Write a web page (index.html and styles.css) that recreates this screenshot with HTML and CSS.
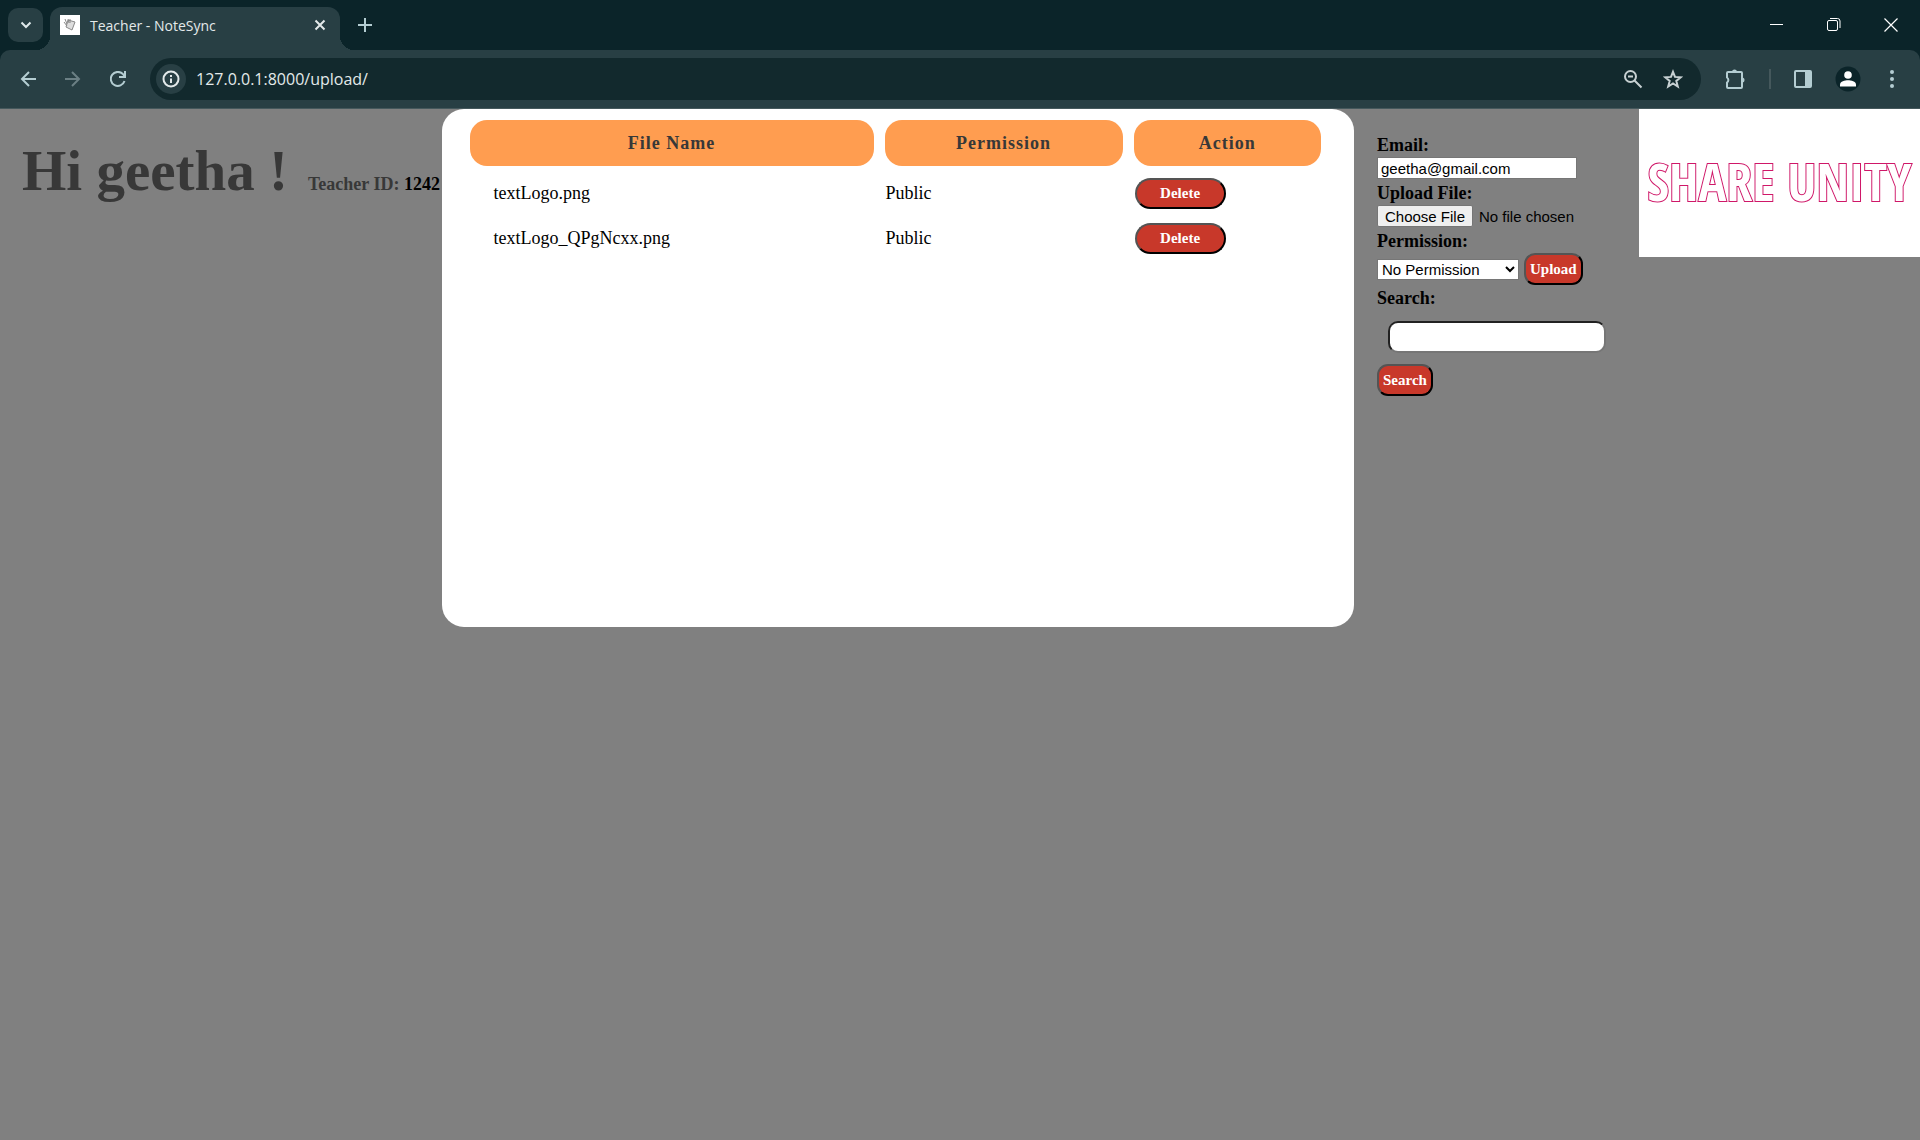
FILE: index.html
```html
<!DOCTYPE html>
<html lang="en">
<head>
<meta charset="utf-8">
<title>Teacher - NoteSync</title>
<link rel="stylesheet" href="styles.css">
</head>
<body>
<header class="browser">
  <div class="tabstrip">
    <button class="tab-search" aria-label="Search tabs"><svg width="12" height="8" viewBox="0 0 12 8"><path d="M1.500 1.500 6 6l4.500-4.500" fill="none" stroke="currentColor" stroke-width="2"/></svg></button>
    <div class="tab">
      <svg class="favicon" width="20" height="20" viewBox="0 0 20 20"><path fill="#fff" d="M0 0h20v20H0z"/><g fill="#ddd" stroke="#888"><path d="m8 5 7 2-3 8-6-3z"/><path d="m5 4 2 5M4 7l3 4M8 4l1 4M10 4l0 4"/></g></svg>
      <span class="tab-title">Teacher - NoteSync</span>
      <button class="icon-btn" aria-label="Close tab"><svg width="12" height="12" viewBox="0 0 12 12"><path d="m1.500 1.500 9 9m0-9-9 9" stroke="currentColor" stroke-width="2"/></svg></button>
    </div>
    <button class="icon-btn new-tab" aria-label="New tab"><svg width="14" height="14" viewBox="0 0 14 14"><path d="M7 0v14M0 7h14" stroke="currentColor" stroke-width="2"/></svg></button>
    <div class="window-controls">
      <button class="icon-btn" aria-label="Minimize"><svg width="14" height="14" viewBox="0 0 14 14"><path d="M0 6.500h13" stroke="#fff"/></svg></button>
      <button class="icon-btn" aria-label="Restore"><svg width="14" height="14" viewBox="0 0 14 14" fill="none" stroke="#fff"><rect x=".5" y="2.500" width="10" height="10" rx="1.500"/><path d="M3 .5h7.500a2.500 2.500 0 0 1 2.500 2.500v7"/></svg></button>
      <button class="icon-btn" aria-label="Close"><svg width="14" height="14" viewBox="0 0 14 14"><path d="m.5.5 13 13m0-13-13 13" stroke="#fff" stroke-width="1.200"/></svg></button>
    </div>
  </div>
  <div class="toolbar">
    <nav class="nav-buttons">
      <button class="icon-btn" aria-label="Back"><svg width="16" height="16" viewBox="0 0 16 16"><path d="M16 8H2m7-7L2 8l7 7" fill="none" stroke="currentColor" stroke-width="2"/></svg></button>
      <button class="icon-btn dim" aria-label="Forward"><svg width="16" height="16" viewBox="0 0 16 16"><path d="M0 8h14M7 1l7 7-7 7" fill="none" stroke="currentColor" stroke-width="2"/></svg></button>
      <button class="icon-btn" aria-label="Reload"><svg width="16" height="16" viewBox="0 0 16 16"><path d="M14.500 10A7 7 0 1 1 13 3.200L14.500 5" fill="none" stroke="currentColor" stroke-width="2"/><path d="M16 0v7H9V5h5V0z" fill="currentColor"/></svg></button>
    </nav>
    <div class="omnibox">
      <button class="site-info" aria-label="Site information"><svg width="18" height="18" viewBox="0 0 18 18"><circle cx="9" cy="9" r="7.500" fill="none" stroke="currentColor" stroke-width="2"/><path d="M9 5v2m0 1.500V13" stroke="currentColor" stroke-width="2"/></svg></button>
      <input class="url" type="text" aria-label="Address" value="127.0.0.1:8000/upload/">
      <button class="icon-btn" aria-label="Zoom"><svg width="20" height="20" viewBox="0 0 20 20"><g fill="none" stroke="currentColor" stroke-width="2"><circle cx="7.500" cy="7.500" r="5.500"/><path d="m11.500 11.500 7 7M5 7.500h5"/></g></svg></button>
      <button class="icon-btn" aria-label="Bookmark"><svg width="20" height="20" viewBox="0 0 20 20"><path d="m10 2.800 2 5.100 5.800.4-4.500 3.600 1.500 5.600-4.800-3.100-4.800 3.100 1.500-5.600-4.500-3.600 5.800-.4z" fill="none" stroke="currentColor" stroke-width="2"/></svg></button>
    </div>
    <div class="actions">
      <button class="icon-btn" aria-label="Extensions"><svg width="22" height="22" viewBox="0 0 22 22"><path d="M4 4h13a1 1 0 0 1 1 1v14a1 1 0 0 1-1 1H4a1 1 0 0 1-1-1v-4.500a3 3 0 0 0 0-5V5a1 1 0 0 1 1-1z" fill="none" stroke="currentColor" stroke-width="2"/><path d="M8 4a2.500 2.500 0 0 1 5 0zM18 9.500a2.500 2.500 0 0 1 0 5z" fill="currentColor"/></svg></button>
      <span class="divider"></span>
      <button class="icon-btn" aria-label="Side panel"><svg width="18" height="18" viewBox="0 0 18 18"><rect x="1" y="1" width="16" height="16" rx="1" fill="none" stroke="currentColor" stroke-width="2"/><path d="M11 1h6v16h-6z" fill="currentColor"/></svg></button>
      <button class="icon-btn" aria-label="Profile"><svg width="26" height="26" viewBox="0 0 26 26"><circle cx="13" cy="13" r="12.500" fill="#0b2429"/><circle cx="13" cy="9" r="3.800" fill="#fff"/><path d="M5 20.500v-2c0-3 5-4.300 8-4.300s8 1.300 8 4.300v2z" fill="#fff"/></svg></button>
      <button class="icon-btn" aria-label="Menu"><svg width="16" height="20" viewBox="0 0 16 20" fill="currentColor"><circle cx="8" cy="3" r="2"/><circle cx="8" cy="10" r="2"/><circle cx="8" cy="17" r="2"/></svg></button>
    </div>
  </div>
</header>
<main class="page">
  <section class="greeting">
    <h1>Hi geetha !</h1>
    <p class="teacher">Teacher ID: <span class="teacher-id">1242</span></p>
  </section>
  <section class="files">
    <table>
      <colgroup><col class="col-name"><col class="col-permission"><col class="col-action"></colgroup>
      <thead><tr><th>File Name</th><th>Permission</th><th>Action</th></tr></thead>
      <tbody>
        <tr><td>textLogo.png</td><td>Public</td><td><button class="btn btn-delete">Delete</button></td></tr>
        <tr><td>textLogo_QPgNcxx.png</td><td>Public</td><td><button class="btn btn-delete">Delete</button></td></tr>
      </tbody>
    </table>
  </section>
  <form class="upload">
    <label for="email">Email:</label>
    <input class="email" id="email" type="text" value="geetha@gmail.com">
    <label for="file">Upload File:</label>
    <input class="file" id="file" type="file">
    <label for="permission">Permission:</label>
    <div class="permission-row">
      <select id="permission"><option>No Permission</option><option>Public</option></select>
      <button class="btn" type="button">Upload</button>
    </div>
    <label for="search">Search:</label>
    <input class="search" id="search" type="text">
    <button class="btn" type="button">Search</button>
  </form>
  <aside class="logo">SHARE UNITY</aside>
</main>
</body>
</html>
```
FILE: styles.css
```css
* { box-sizing: border-box; }

body {
  display: flex;
  flex-direction: column;
  min-height: 100vh;
  margin: 0;
  background: #808080;
  font-family: "Liberation Serif", serif;
  font-size: 18px;
  color: #000;
}

/* Browser window */
.browser {
  background: #0b2429;
  color: #b4cdd2;
  font-family: "Open Sans", sans-serif;
}

.tabstrip {
  display: flex;
  align-items: center;
  height: 50px;
  padding-left: 8px;
}

.icon-btn,
.tab-search,
.site-info {
  display: flex;
  align-items: center;
  justify-content: center;
  padding: 0;
  border: 0;
  background: none;
  color: inherit;
}

.tab-search {
  width: 35px;
  height: 34px;
  border-radius: 10px;
  background: #283f44;
  color: #dfe9eb;
}

.tab {
  position: relative;
  display: flex;
  align-items: center;
  align-self: flex-end;
  gap: 10px;
  width: 290px;
  height: 43px;
  margin-left: 7px;
  padding: 0 14px 7px 10px;
  border-radius: 12px 12px 0 0;
  background: #283f44;
  color: #e3e9ea;
}

.tab::before,
.tab::after {
  content: "";
  position: absolute;
  bottom: 0;
  width: 14px;
  height: 14px;
}

.tab::before {
  right: 100%;
  background: radial-gradient(circle at 0 0, transparent 14px, #283f44 14px);
}

.tab::after {
  left: 100%;
  background: radial-gradient(circle at 100% 0, transparent 14px, #283f44 14px);
}

.tab-title {
  flex: 1;
  font-size: 14px;
}

.new-tab { margin-left: 18px; }

.window-controls {
  display: flex;
  gap: 43px;
  margin-left: auto;
  padding-right: 22px;
}

.toolbar {
  display: flex;
  align-items: center;
  height: 59px;
  padding: 0 20px;
  border-bottom: 1px solid #45585c;
  border-radius: 10px 10px 0 0;
  background: #283f44;
}

.nav-buttons {
  display: flex;
  gap: 29px;
}

.dim { color: #6b7f84; }

.omnibox {
  display: flex;
  flex: 1;
  align-items: center;
  gap: 20px;
  height: 42px;
  margin-left: 24px;
  padding: 0 18px 0 6px;
  border-radius: 21px;
  background: #12292d;
  color: #c7d0d2;
}

.site-info {
  width: 30px;
  height: 30px;
  border-radius: 50%;
  background: #283f44;
  color: #e3e9ea;
}

.url {
  flex: 1;
  min-width: 0;
  margin-left: -10px;
  padding: 0;
  border: 0;
  background: none;
  color: #e3e9ea;
  font: 16px "Open Sans", sans-serif;
}

.actions {
  display: flex;
  align-items: center;
  gap: 23px;
  margin-left: 23px;
}

.divider {
  width: 2px;
  height: 20px;
  background: #45585c;
}

/* Page */
.page {
  display: grid;
  grid-template-columns: 23% 475fr 285px 281px;
  align-items: start;
}

.greeting {
  display: flex;
  align-items: baseline;
  gap: 20px;
  padding: 29px 0 0 22px;
  color: #383838;
  white-space: nowrap;
}

h1 {
  margin: 0;
  font-size: 57px;
}

.teacher {
  margin: 0;
  font-weight: bold;
}

.teacher-id { color: #000; }

.files {
  min-height: 518px;
  padding: 0 22px 0 17px;
  border-radius: 22px;
  background: #fff;
}

table {
  width: 100%;
  border-spacing: 11px;
  table-layout: fixed;
}

.col-name { width: 404px; }
.col-permission { width: 238px; }

th {
  height: 46px;
  border-radius: 17px;
  background: #ff9d50;
  color: #383838;
  letter-spacing: 1px;
}

td {
  height: 34px;
  padding: 0 1px 2px;
}

td:first-child { padding-left: 24px; }

.btn {
  height: 32px;
  padding: 0 4px;
  border: 2px outset #000;
  border-radius: 11px;
  background: #c8382a;
  color: #fff;
  font: bold 15px "Liberation Serif", serif;
}

.btn-delete {
  display: block;
  width: 91px;
  height: 31px;
  border-radius: 16px;
}

.upload {
  display: flex;
  flex-direction: column;
  align-items: flex-start;
  padding: 24px 0 0 23px;
}

.upload label {
  font-weight: bold;
  line-height: 24px;
}

.upload input,
.upload select {
  font: 15px "Liberation Sans", sans-serif;
}

.upload .email {
  width: 200px;
  height: 22px;
  margin: 0 0 2px;
  padding: 0 3px;
  border: 1px solid #767676;
  background: #fff;
}

.upload .file {
  width: 240px;
  height: 24px;
}

.file::file-selector-button {
  width: 96px;
  height: 22px;
  margin-right: 6px;
  padding: 0;
  border: 1px solid #767676;
  border-radius: 2px;
  background: #efefef;
  font: 15px "Liberation Sans", sans-serif;
}

.permission-row {
  display: flex;
  align-items: center;
  gap: 5px;
  margin-bottom: 1px;
}

select {
  width: 142px;
  height: 21px;
  border: 1px solid #767676;
  background: #fff;
}

.search {
  width: 218px;
  height: 32px;
  margin: 11px;
  border: 2px inset #767676;
  border-radius: 10px;
  background: #fff;
}

.logo {
  display: flex;
  align-items: center;
  justify-content: center;
  height: 148px;
  padding-bottom: 6px;
  background: #fff;
  color: #fff;
  font: bold 52px "Open Sans Condensed", "Liberation Sans Narrow", "Liberation Sans", sans-serif;
  white-space: nowrap;
  -webkit-text-stroke: 2px #cf1768;
  paint-order: stroke fill;
}
```
